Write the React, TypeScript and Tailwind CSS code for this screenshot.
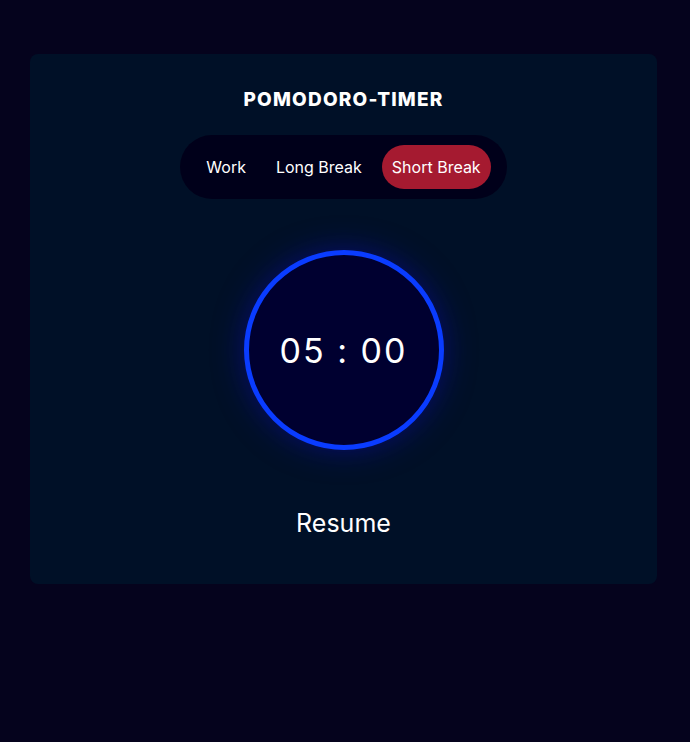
import React, { useState } from 'react';

const modes = ['Work', 'Long Break', 'Short Break'];

const App: React.FC = () => {
  const [mode, setMode] = useState('Short Break');

  return (
    <div className="min-h-[742px] w-full bg-[#05031d] pt-[54px] font-['Inter',sans-serif] text-white">
      <div className="ml-[30px] flex h-[530px] w-[627px] flex-col items-center rounded-lg bg-[#001027] pt-[32px]">
        <h1 className="text-[19px] font-extrabold leading-[28px] tracking-[1.2px]">POMODORO-TIMER</h1>

        <div className="mt-[21px] flex shrink-0 items-center gap-[10px] rounded-full bg-[#00001a] px-[16px] py-[10px]">
          {modes.map((m) => (
            <button
              key={m}
              onClick={() => setMode(m)}
              className={
                m === mode
                  ? 'h-[44px] rounded-full bg-[#a51a30] px-[10px] text-[16px] text-white'
                  : 'h-[44px] rounded-full px-[10px] text-[16px] text-white'
              }
            >
              {m}
            </button>
          ))}
        </div>

        <div className="mt-[51px] flex h-[200px] w-[200px] shrink-0 items-center justify-center rounded-full border-[5px] border-[#0a3cff] bg-[#000030] shadow-[0_0_30px_rgba(10,10,150,0.65)]">
          <span className="text-[34px] font-normal tracking-[2px]">05 : 00</span>
        </div>

        <button className="mt-[56px] text-[25px] leading-[34px] text-white">Resume</button>
      </div>
    </div>
  );
};

export default App;
